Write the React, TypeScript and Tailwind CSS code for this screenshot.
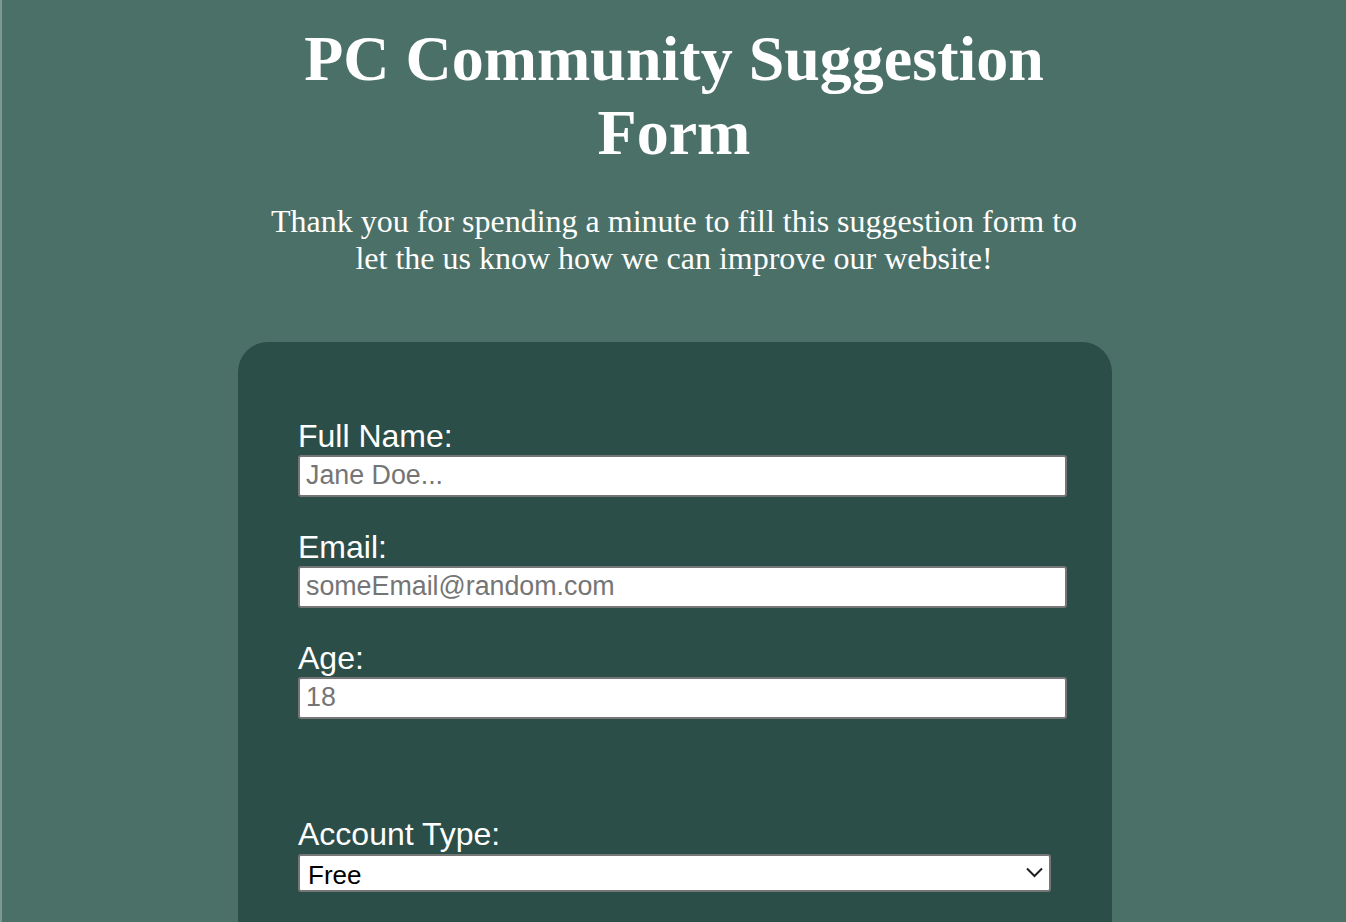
import React from "react";

const inputClass =
  "mt-[1px] block h-[42px] w-[769px] rounded-[3px] border-2 border-[#767676] bg-white px-[6px] text-[26.8px] text-black outline-none placeholder:text-[#757575]";

function Field({
  label,
  placeholder,
  first = false,
}: {
  label: string;
  placeholder: string;
  first?: boolean;
}) {
  return (
    <div className={first ? "" : "mt-[32px]"}>
      <label className="block text-[32px] leading-[36px]">{label}</label>
      <input type="text" placeholder={placeholder} className={inputClass} />
    </div>
  );
}

function App() {
  return (
    <div className="min-h-screen border-l-2 border-[#7d9893] bg-[#4b7068] font-['Liberation_Serif',serif] text-white">
      <header className="mx-auto w-[810px] pt-[22px] text-center">
        <h1 className="text-[64px] font-bold leading-[1.15]">
          PC Community Suggestion Form
        </h1>
        <p className="mt-[34px] text-[32px] leading-[1.15]">
          Thank you for spending a minute to fill this suggestion form to let
          the us know how we can improve our website!
        </p>
      </header>

      <form className="ml-[236px] mt-[65px] w-[874px] rounded-t-[30px] bg-[#2c4e48] pb-[80px] pl-[60px] pt-[76px] font-['Liberation_Sans',Arial,sans-serif]">
        <Field label="Full Name:" placeholder="Jane Doe..." first />
        <Field label="Email:" placeholder="someEmail@random.com" />
        <Field label="Age:" placeholder="18" />

        <div className="mt-[97px]">
          <label className="block text-[32px] leading-[36px]">
            Account Type:
          </label>
          <div className="relative mt-[2px] w-[753px]">
            <select className="block h-[38px] w-full appearance-none rounded-[3px] border-2 border-[#767676] bg-white pl-[8px] text-[26px] text-black outline-none">
              <option>Free</option>
              <option>Premium</option>
            </select>
            <svg
              className="pointer-events-none absolute right-[8px] top-[13px]"
              width="17"
              height="11"
              viewBox="0 0 17 11"
              fill="none"
            >
              <path
                d="M1 1.5 L8.5 9 L16 1.5"
                stroke="#1f1f1f"
                strokeWidth="2"
              />
            </svg>
          </div>
        </div>
      </form>
    </div>
  );
}

export default App;
